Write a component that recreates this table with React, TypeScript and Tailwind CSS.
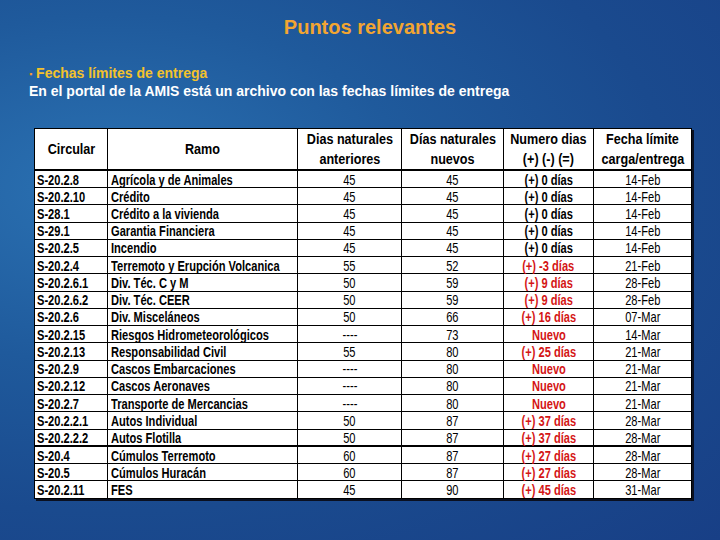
const rows: [string, string, string, string, string, string, boolean][] = [
  ["S-20.2.8", "Agrícola y de Animales", "45", "45", "(+) 0 días", "14-Feb", false],
  ["S-20.2.10", "Crédito", "45", "45", "(+) 0 días", "14-Feb", false],
  ["S-28.1", "Crédito a la vivienda", "45", "45", "(+) 0 días", "14-Feb", false],
  ["S-29.1", "Garantia Financiera", "45", "45", "(+) 0 días", "14-Feb", false],
  ["S-20.2.5", "Incendio", "45", "45", "(+) 0 días", "14-Feb", false],
  ["S-20.2.4", "Terremoto y Erupción Volcanica", "55", "52", "(+) -3 días", "21-Feb", true],
  ["S-20.2.6.1", "Div. Téc. C y M", "50", "59", "(+) 9 días", "28-Feb", true],
  ["S-20.2.6.2", "Div. Téc. CEER", "50", "59", "(+) 9 días", "28-Feb", true],
  ["S-20.2.6", "Div. Misceláneos", "50", "66", "(+) 16 días", "07-Mar", true],
  ["S-20.2.15", "Riesgos Hidrometeorológicos", "----", "73", "Nuevo", "14-Mar", true],
  ["S-20.2.13", "Responsabilidad Civil", "55", "80", "(+) 25 días", "21-Mar", true],
  ["S-20.2.9", "Cascos Embarcaciones", "----", "80", "Nuevo", "21-Mar", true],
  ["S-20.2.12", "Cascos Aeronaves", "----", "80", "Nuevo", "21-Mar", true],
  ["S-20.2.7", "Transporte de Mercancias", "----", "80", "Nuevo", "21-Mar", true],
  ["S-20.2.2.1", "Autos Individual", "50", "87", "(+) 37 días", "28-Mar", true],
  ["S-20.2.2.2", "Autos Flotilla", "50", "87", "(+) 37 días", "28-Mar", true],
  ["S-20.4", "Cúmulos Terremoto", "60", "87", "(+) 27 días", "28-Mar", true],
  ["S-20.5", "Cúmulos Huracán", "60", "87", "(+) 27 días", "28-Mar", true],
  ["S-20.2.11", "FES", "45", "90", "(+) 45 días", "31-Mar", true],
];

const font = "font-['Liberation_Sans',Arial,sans-serif]";

// narrow text, like Arial Narrow in the slide
function L({ children }: { children: React.ReactNode }) {
  return <span className="inline-block origin-left scale-x-[0.74] whitespace-nowrap">{children}</span>;
}
function C({ children }: { children: React.ReactNode }) {
  return <span className="inline-block origin-center scale-x-[0.74] whitespace-nowrap">{children}</span>;
}
function H({ children }: { children: React.ReactNode }) {
  return <span className="inline-block origin-center scale-x-[0.9] whitespace-nowrap">{children}</span>;
}

export default function App() {
  return (
    <div
      className={`w-[720px] h-[540px] overflow-hidden flex flex-col ${font} bg-[radial-gradient(ellipse_at_15%_35%,#2b72b3_0%,#1f5a9c_35%,#1a4a8e_65%,#183f86_100%)]`}
    >
      <h1 className="text-center text-[20px] font-bold text-[#f2a531] pt-[14px] pl-[20px] leading-[26px]">
        Puntos relevantes
      </h1>
      <div className="pl-[29px] pt-[25px] text-[14px] font-bold leading-[17px]">
        <div className="text-[#f3c22c]">
          <span className="text-[#f29a2e] text-[9px] align-middle">▪</span> Fechas límites de entrega
        </div>
        <div className="text-white">En el portal de la AMIS está un archivo con las fechas límites de entrega</div>
      </div>
      <div className="pl-[34px] pt-[28px]">
        <table className="table-fixed border-collapse w-[657px] bg-white text-black text-[15px] shadow-[2px_2px_0_#0a1020]">
          <colgroup>
            <col className="w-[73px]" />
            <col className="w-[190px]" />
            <col className="w-[104px]" />
            <col className="w-[102px]" />
            <col className="w-[90px]" />
            <col className="w-[98px]" />
          </colgroup>
          <thead>
            <tr className="h-[42px] font-bold text-[14px] leading-[20px]">
              <th className="border border-black border-b-2 font-bold"><H>Circular</H></th>
              <th className="border border-black border-b-2 font-bold"><H>Ramo</H></th>
              <th className="border border-black border-b-2 font-bold"><H>Dias naturales</H><br /><H>anteriores</H></th>
              <th className="border border-black border-b-2 font-bold"><H>Días naturales</H><br /><H>nuevos</H></th>
              <th className="border border-black border-b-2 font-bold"><H>Numero dias</H><br /><H>(+) (-) (=)</H></th>
              <th className="border border-black border-b-2 font-bold"><H>Fecha límite</H><br /><H>carga/entrega</H></th>
            </tr>
          </thead>
          <tbody>
            {rows.map((r, i) => (
              <tr key={r[0]} className={`h-[17.26px] leading-[15px] ${i === 16 ? "border-t-2 border-black" : ""}`}>
                <td className="border border-black pl-[2px] p-0 font-bold overflow-hidden"><L>{r[0]}</L></td>
                <td className="border border-black pl-[3px] p-0 font-bold overflow-hidden"><L>{r[1]}</L></td>
                <td className="border border-black p-0 text-center"><C>{r[2]}</C></td>
                <td className="border border-black p-0 text-center"><C>{r[3]}</C></td>
                <td className={`border border-black p-0 text-center font-bold ${r[6] ? "text-[#d41515]" : "text-black"}`}><C>{r[4]}</C></td>
                <td className="border border-black p-0 text-center"><C>{r[5]}</C></td>
              </tr>
            ))}
          </tbody>
        </table>
      </div>
    </div>
  );
}
